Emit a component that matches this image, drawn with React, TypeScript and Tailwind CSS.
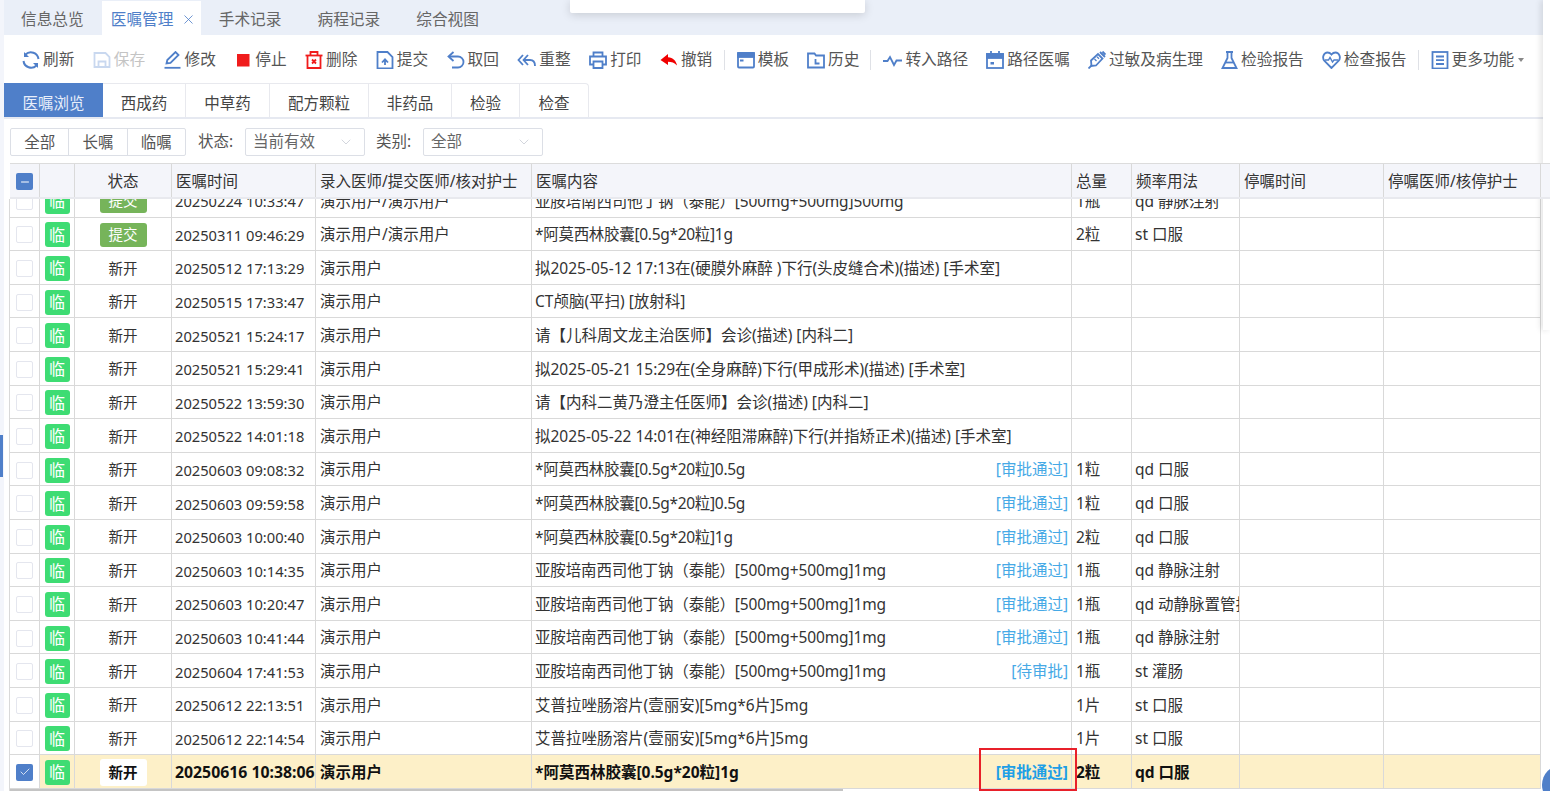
import { ReactNode } from "react"
import { ChevronDown, Check, Minus, X } from "lucide-react"

const BLUE = "#4f7fc9"
const RED = "#f01c1c"

type IconProps = { children: ReactNode; w?: number }

const Ico = ({ children, w = 18 }: IconProps) => (
	<svg width={w} height={18} viewBox="0 0 18 18" fill="none" stroke={BLUE} strokeWidth="1.800" className="shrink-0">
		{children}
	</svg>
)

const toolbar: { icon: ReactNode; label: string; muted?: boolean; gap?: number }[] = [
	{ label: "刷新", icon: <Ico><path d="M16.500 8A7.700 7.700 0 0 0 3.500 3.500" strokeWidth="2" /><path d="M1.500 10a7.700 7.700 0 0 0 13 4.500" strokeWidth="2" /><path d="M2 1v5h5z" fill={BLUE} stroke="none" /><path d="M16 17v-5h-5z" fill={BLUE} stroke="none" /></Ico> },
	{ label: "保存", muted: true, icon: <svg width="18" height="18" viewBox="0 0 18 18" fill="none" stroke="#c9d8ef" strokeWidth="1.800" className="shrink-0"><path d="M1.500 2h11l4 4v10h-15z" /><path d="M5.500 16v-5.500h7V16" /></svg> },
	{ label: "修改", icon: <Ico><path d="M2.500 12.500l.8-3.500L11.500 1l3 3-8 8z" /><path d="M0.500 16.800h16" /></Ico> },
	{ label: "停止", icon: <svg width="18" height="18" viewBox="0 0 18 18" className="shrink-0"><rect x="3" y="3" width="12.500" height="12.500" fill={RED} /></svg> },
	{ label: "删除", icon: <svg width="18" height="18" viewBox="0 0 18 18" fill="none" stroke={RED} strokeWidth="1.800" className="shrink-0"><path d="M0.500 4.500h17" /><path d="M5.500 4.500V1h7v3.500" /><path d="M2.500 4.500v12.500h13V4.500" /><path d="M7 8.500l4 4m0-4l-4 4" /></svg> },
	{ label: "提交", icon: <Ico><path d="M1.500 1h10l5 5v11.500h-15z" /><path d="M9 14V9M6 11.500L9 8.300 12 11.500" /></Ico> },
	{ label: "取回", icon: <Ico><path d="M6.500 1L1.500 5.500 6.500 10" /><path d="M2 5.500h9a5.500 5.500 0 0 1 5.500 5.500v0a5.500 5.500 0 0 1-5.500 5.500H5" /></Ico> },
	{ label: "重整", icon: <svg width="19" height="18" viewBox="0 0 19 18" fill="none" stroke={BLUE} strokeWidth="1.800" className="shrink-0"><path d="M6 4L1.500 9 6 14" /><path d="M11 4L6.500 9l4.500 5" /><path d="M7 9h6c3 0 5 2 5 6" /></svg> },
	{ label: "打印", icon: <Ico><path d="M4.500 5.500V1.500h9v4" /><path d="M4.500 13.500H1V5.500h16v8h-3.500" /><path d="M4.500 10.500h9V17h-9z" /></Ico> },
	{ label: "撤销", icon: <svg width="18" height="18" viewBox="0 0 18 18" className="shrink-0"><path d="M8 3L0.500 9 8 14v-3.200c3.500 0 6.500.8 9 3.700C16 9.500 13 6.800 8 6.300z" fill="#f00000" /></svg> },
	{ label: "模板", gap: 1, icon: <Ico><rect x="1" y="2" width="16" height="14.500" rx="1" /><rect x="1" y="2" width="16" height="4" fill={BLUE} /><rect x="3" y="8.500" width="3.500" height="2" fill={BLUE} stroke="none" /></Ico> },
	{ label: "历史", icon: <Ico><path d="M1 2.500h6.500l1.500 2h8v12H1z" /><path d="M8.500 8v4.500h4" /></Ico> },
	{ label: "转入路径", gap: 1, icon: <svg width="19" height="18" viewBox="0 0 19 18" fill="none" stroke={BLUE} strokeWidth="1.800" className="shrink-0"><path d="M0 10h4.500l2.500-4 4 8 2.500-4.500H19" /></svg> },
	{ label: "路径医嘱", icon: <Ico><rect x="1" y="3" width="16" height="14" /><rect x="1" y="3" width="16" height="4" fill={BLUE} /><path d="M5 0v3M13 0v3" /><rect x="4.500" y="11" width="3.500" height="2.500" fill={BLUE} stroke="none" /></Ico> },
	{ label: "过敏及病生理", icon: <Ico><path d="M0.500 17.500l3.500-3.500" /><path d="M3 9.500l7-6.500 4.500 4.500-6.500 7-4.500.5z" /><path d="M12 1l5 5M14.500 0.500l3 3" /><path d="M6.500 8l2 2M9 5.800l2 2" strokeWidth="1.300" /></Ico> },
	{ label: "检验报告", icon: <svg width="17" height="18" viewBox="0 0 17 18" fill="none" stroke={BLUE} strokeWidth="1.800" className="shrink-0"><path d="M5 1h7M6.500 1v6L1.500 17h14L10.500 7V1" /><path d="M4.500 11.500h8" /></svg> },
	{ label: "检查报告", icon: <svg width="19" height="18" viewBox="0 0 19 18" fill="none" stroke={BLUE} strokeWidth="1.800" className="shrink-0"><path d="M9.500 17L2.500 10C-.5 6.500 2 1.500 5.500 1.500c1.800 0 3 .8 4 2 1-1.200 2.200-2 4-2 3.500 0 6 5 3 8.500z" /><path d="M3 9h3.500l1.500-2.500 2.500 4.500 1.500-2h4" strokeWidth="1.400" /></svg> },
	{ label: "更多功能", gap: 1, icon: <Ico><rect x="1.500" y="1" width="15" height="16.500" /><path d="M5 5.500h8M5 9.200h8M5 13h8" /></Ico> },
]

const tabs = ["信息总览", "医嘱管理", "手术记录", "病程记录", "综合视图"]
const subTabs = [
	{ label: "西成药", w: "w-[83px]" },
	{ label: "中草药", w: "w-[84px]" },
	{ label: "配方颗粒", w: "w-[99px]" },
	{ label: "非药品", w: "w-[83px]" },
	{ label: "检验", w: "w-[68px]" },
	{ label: "检查", w: "w-[69px]" },
]

const headers = ["", "", "状态", "医嘱时间", "录入医师/提交医师/核对护士", "医嘱内容", "总量", "频率用法", "停嘱时间", "停嘱医师/核停护士"]
const COLS = "grid grid-cols-[30px_35px_97px_144px_216px_540px_60px_108px_144px_157px]"

const AMOX = "*阿莫西林胶囊[0.5g*20粒]"
const TAINENG = "亚胺培南西司他丁钠（泰能）[500mg+500mg]"

type Row = { t: string; user?: string; text: string; audit?: string; qty?: string; freq?: string; status?: string }

const rows: Row[] = [
	{ t: "20250224 10:33:47", user: "演示用户/演示用户", text: TAINENG + "500mg", qty: "1瓶", freq: "qd 静脉注射", status: "提交" },
	{ t: "20250311 09:46:29", user: "演示用户/演示用户", text: AMOX + "1g", qty: "2粒", freq: "st 口服", status: "提交" },
	{ t: "20250512 17:13:29", text: "拟2025-05-12 17:13在(硬膜外麻醉 )下行(头皮缝合术)(描述) [手术室]" },
	{ t: "20250515 17:33:47", text: "CT颅脑(平扫) [放射科]" },
	{ t: "20250521 15:24:17", text: "请【儿科周文龙主治医师】会诊(描述) [内科二]" },
	{ t: "20250521 15:29:41", text: "拟2025-05-21 15:29在(全身麻醉)下行(甲成形术)(描述) [手术室]" },
	{ t: "20250522 13:59:30", text: "请【内科二黄乃澄主任医师】会诊(描述) [内科二]" },
	{ t: "20250522 14:01:18", text: "拟2025-05-22 14:01在(神经阻滞麻醉)下行(并指矫正术)(描述) [手术室]" },
	{ t: "20250603 09:08:32", text: AMOX + "0.5g", audit: "[审批通过]", qty: "1粒", freq: "qd 口服" },
	{ t: "20250603 09:59:58", text: AMOX + "0.5g", audit: "[审批通过]", qty: "1粒", freq: "qd 口服" },
	{ t: "20250603 10:00:40", text: AMOX + "1g", audit: "[审批通过]", qty: "2粒", freq: "qd 口服" },
	{ t: "20250603 10:14:35", text: TAINENG + "1mg", audit: "[审批通过]", qty: "1瓶", freq: "qd 静脉注射" },
	{ t: "20250603 10:20:47", text: TAINENG + "1mg", audit: "[审批通过]", qty: "1瓶", freq: "qd 动静脉置管护理" },
	{ t: "20250603 10:41:44", text: TAINENG + "1mg", audit: "[审批通过]", qty: "1瓶", freq: "qd 静脉注射" },
	{ t: "20250604 17:41:53", text: TAINENG + "1mg", audit: "[待审批]", qty: "1瓶", freq: "st 灌肠" },
	{ t: "20250612 22:13:51", text: "艾普拉唑肠溶片(壹丽安)[5mg*6片]5mg", qty: "1片", freq: "st 口服" },
	{ t: "20250612 22:14:54", text: "艾普拉唑肠溶片(壹丽安)[5mg*6片]5mg", qty: "1片", freq: "st 口服" },
]

const cell = "h-full min-w-0 flex items-center border-r border-[#d9d9d9] whitespace-nowrap overflow-hidden"

const OrderRow = ({ r, selected }: { r: Row; selected?: boolean }) => {
	const bg = selected ? "bg-[#fdf0c8]" : ""
	const tight = selected ? "" : r.text.startsWith("*") ? "tracking-[-0.3px]" : r.text.startsWith("亚") ? "tracking-[-0.13px]" : ""
	return (
		<div className={`${COLS} h-[33.6px] border-b border-[#d9d9d9] text-[15.500px] ${selected ? "font-bold text-[#111]" : "text-[#333]"}`}>
			<div className={`${cell} pt-[2px] justify-center bg-white`}>
				{selected ? (
					<span className="w-[17px] h-[17px] rounded-[2px] bg-[#4f7fc9] flex items-center justify-center">
						<Check size={12} color="#fff" strokeWidth={1.5} />
					</span>
				) : (
					<span className="w-[17px] h-[17px] rounded-[2px] border border-[#e4e6ee] bg-white" />
				)}
			</div>
			<div className={`${cell} pt-[2px] ${bg} justify-center`}>
				<span className="w-[25px] h-[25px] rounded-[3px] bg-[#3edc73] text-white text-[16px] font-normal flex items-center justify-center">临</span>
			</div>
			<div className={`${cell} pt-[2px] ${bg} justify-center`}>
				{r.status ? (
					<span className="w-[47px] h-[24px] rounded-[3px] bg-[#76b45a] text-white text-[14.500px] flex items-center justify-center">{r.status}</span>
				) : selected ? (
					<span className="w-[47px] h-[27px] rounded-[3px] bg-white text-[14.500px] flex items-center justify-center">新开</span>
				) : (
					<span className="text-[14.500px]">新开</span>
				)}
			</div>
			<div className={`${cell} pt-[2px] ${bg} pl-[3px] ${selected ? "text-[15.800px]" : "text-[14.700px]"}`}>{r.t}</div>
			<div className={`${cell} pt-[2px] ${bg} pl-[4px]`}>{r.user || "演示用户"}</div>
			<div className={`${cell} pt-[2px] ${bg} pl-[3px] pr-[3px] justify-between`}>
				<span className={tight}>{r.text}</span>
				{r.audit && <span className={`${selected ? "text-[#1d9fe6]" : "text-[#46a9e6]"}`}>{r.audit}</span>}
			</div>
			<div className={`${cell} pt-[2px] ${bg} pl-[4px]`}>{r.qty}</div>
			<div className={`${cell} pt-[2px] ${bg} pl-[3px]`}>{r.freq}</div>
			<div className={`${cell} ${bg}`} />
			<div className={`${cell} ${bg}`} />
		</div>
	)
}

const SelectBox = ({ value }: { value: string }) => (
	<div className="w-[120px] h-[28px] border border-[#dcdfe6] rounded-[2px] flex items-center justify-between pl-[7px] pr-[10px] text-[#666]">
		<span>{value}</span>
		<ChevronDown size={16} color="#c8ccd4" strokeWidth={1.200} />
	</div>
)

export default function App() {
	return (
		<div className="relative w-[1550px] h-[791px] overflow-hidden bg-white pl-[4px]" style={{ fontFamily: '"Noto Sans", "Noto Sans CJK SC", sans-serif' }}>
			{/* left strip */}
			<div className="absolute left-0 top-0 w-[4px] h-full bg-[#f3f5fb]" />
			<div className="absolute left-0 top-[435px] w-[3px] h-[42px] bg-[#4f7fc9]" />

			{/* top tabs */}
			<div className="h-[35px] bg-[#eaeff8] flex items-end text-[15.700px] text-[#666]">
				{tabs.map((t, i) =>
					i === 1 ? (
						<div key={t} className="h-[34px] w-[99px] ml-[1px] bg-white flex items-center pl-[9px] pt-[3px] gap-[7px] text-[#4f7fc9]">
							<span>{t}</span>
							<X size={15} strokeWidth={1.300} />
						</div>
					) : (
						<div key={t} className={`h-[35px] flex items-center pt-[4px] ${i === 0 ? "pl-[17px] pr-[17px]" : "pl-[18px] pr-[18px]"}`}>{t}</div>
					)
				)}
			</div>

			{/* toolbar */}
			<div className="h-[48px] flex items-center pl-[18px] pt-[2px] text-[15.700px] text-[#555]">
				{toolbar.map((b, i) => (
					<div key={b.label} className="flex items-center">
						{b.gap && <div className="w-px h-[20px] bg-[#dfe1e6] ml-[-7px] mr-[12px]" />}
						<div className={`flex items-center gap-[3px] ${i < 10 ? "mr-[18.400px]" : "mr-[18px]"} ${b.muted ? "text-[#c4c4c4]" : ""}`}>
							{b.icon}
							<span>{b.label}</span>
						</div>
						{i === toolbar.length - 1 && (
							<span className="ml-[-14px] w-0 h-0 border-x-[3.500px] border-x-transparent border-t-[4px] border-t-[#888]" />
						)}
					</div>
				))}
			</div>

			{/* sub tabs */}
			<div className="h-[36px] flex border-b-[2px] border-[#e6e9f1] text-[15.500px] text-[#444]">
				<div className="w-[99px] bg-[#4f7fc9] text-[#e8eefa] flex items-center justify-center pt-[7px]">医嘱浏览</div>
				{subTabs.map((t) => (
					<div key={t.label} className={`${t.w} border-r border-t border-[#e8e9ee] last:rounded-tr-[4px] flex items-center justify-center pt-[7px]`}>{t.label}</div>
				))}
			</div>

			{/* filters */}
			<div className="h-[44px] flex items-center pl-[6px] pt-[2px] text-[15.500px]">
				<div className="flex h-[28px] w-[176px] border border-[#dcdfe6] rounded-[2px] text-[#555]">
					<span className="flex-1 flex items-center justify-center border-r border-[#dcdfe6] pt-[2px]">全部</span>
					<span className="flex-1 flex items-center justify-center border-r border-[#dcdfe6] pt-[2px]">长嘱</span>
					<span className="flex-1 flex items-center justify-center pt-[2px]">临嘱</span>
				</div>
				<span className="ml-[12px] mr-[10px] text-[#555] w-[37px] whitespace-nowrap">状态:</span>
				<SelectBox value="当前有效" />
				<span className="ml-[11px] mr-[10px] text-[#555] w-[37px] whitespace-nowrap">类别:</span>
				<SelectBox value="全部" />
			</div>

			{/* order table */}
			<div className="ml-[6px] relative">
				<div className={`${COLS} relative z-10 h-[36px] bg-[#f4f5fa] border-t border-[#dcdcdc] border-b-[2px] border-b-[#e8e9ee] text-[15.500px] text-[#333]`}>
					{headers.map((h, i) => (
						<div key={i} className={`${cell} pt-[2px] ${i === 2 ? "justify-center" : i > 2 ? "pl-[4px]" : ""} ${i === 0 ? "justify-center" : ""}`}>
							{i === 0 && (
								<span className="w-[17px] h-[17px] rounded-[2px] bg-[#4f7fc9] flex items-center justify-center">
									<Minus size={12} color="#fff" strokeWidth={2} />
								</span>
							)}
							{h}
						</div>
					))}
				</div>
				<div className="h-[592px] overflow-hidden border-l border-[#d9d9d9] -ml-px w-[1532px]">
					<div className="-mt-[15px]">
						{rows.map((r) => (
							<OrderRow key={r.t} r={r} />
						))}
						<OrderRow selected r={{ t: "20250616 10:38:06", text: AMOX + "1g", audit: "[审批通过]", qty: "2粒", freq: "qd 口服" }} />
					</div>
				</div>
			</div>

			{/* overlays */}
			<div className="absolute left-[570px] top-0 w-[295px] h-[13px] bg-white rounded-b-[2px] shadow-[0_2px_10px_rgba(0,0,0,0.15)]" />
			<div className="absolute left-[1543px] top-0 w-[7px] h-[330px] bg-white shadow-[-2px_0_6px_rgba(0,0,0,0.12)]" />
			<div className="absolute left-[979px] top-[748px] w-[98px] h-[43px] border-[2px] border-[#e8202a]" />
			<div className="absolute left-[10px] top-[789px] w-[833px] h-[2px] bg-[#c4c4c4]" />
			<div className="absolute left-[1542px] top-[765px] w-[40px] h-[40px] rounded-full bg-[#4f7fc9]" />
		</div>
	)
}
